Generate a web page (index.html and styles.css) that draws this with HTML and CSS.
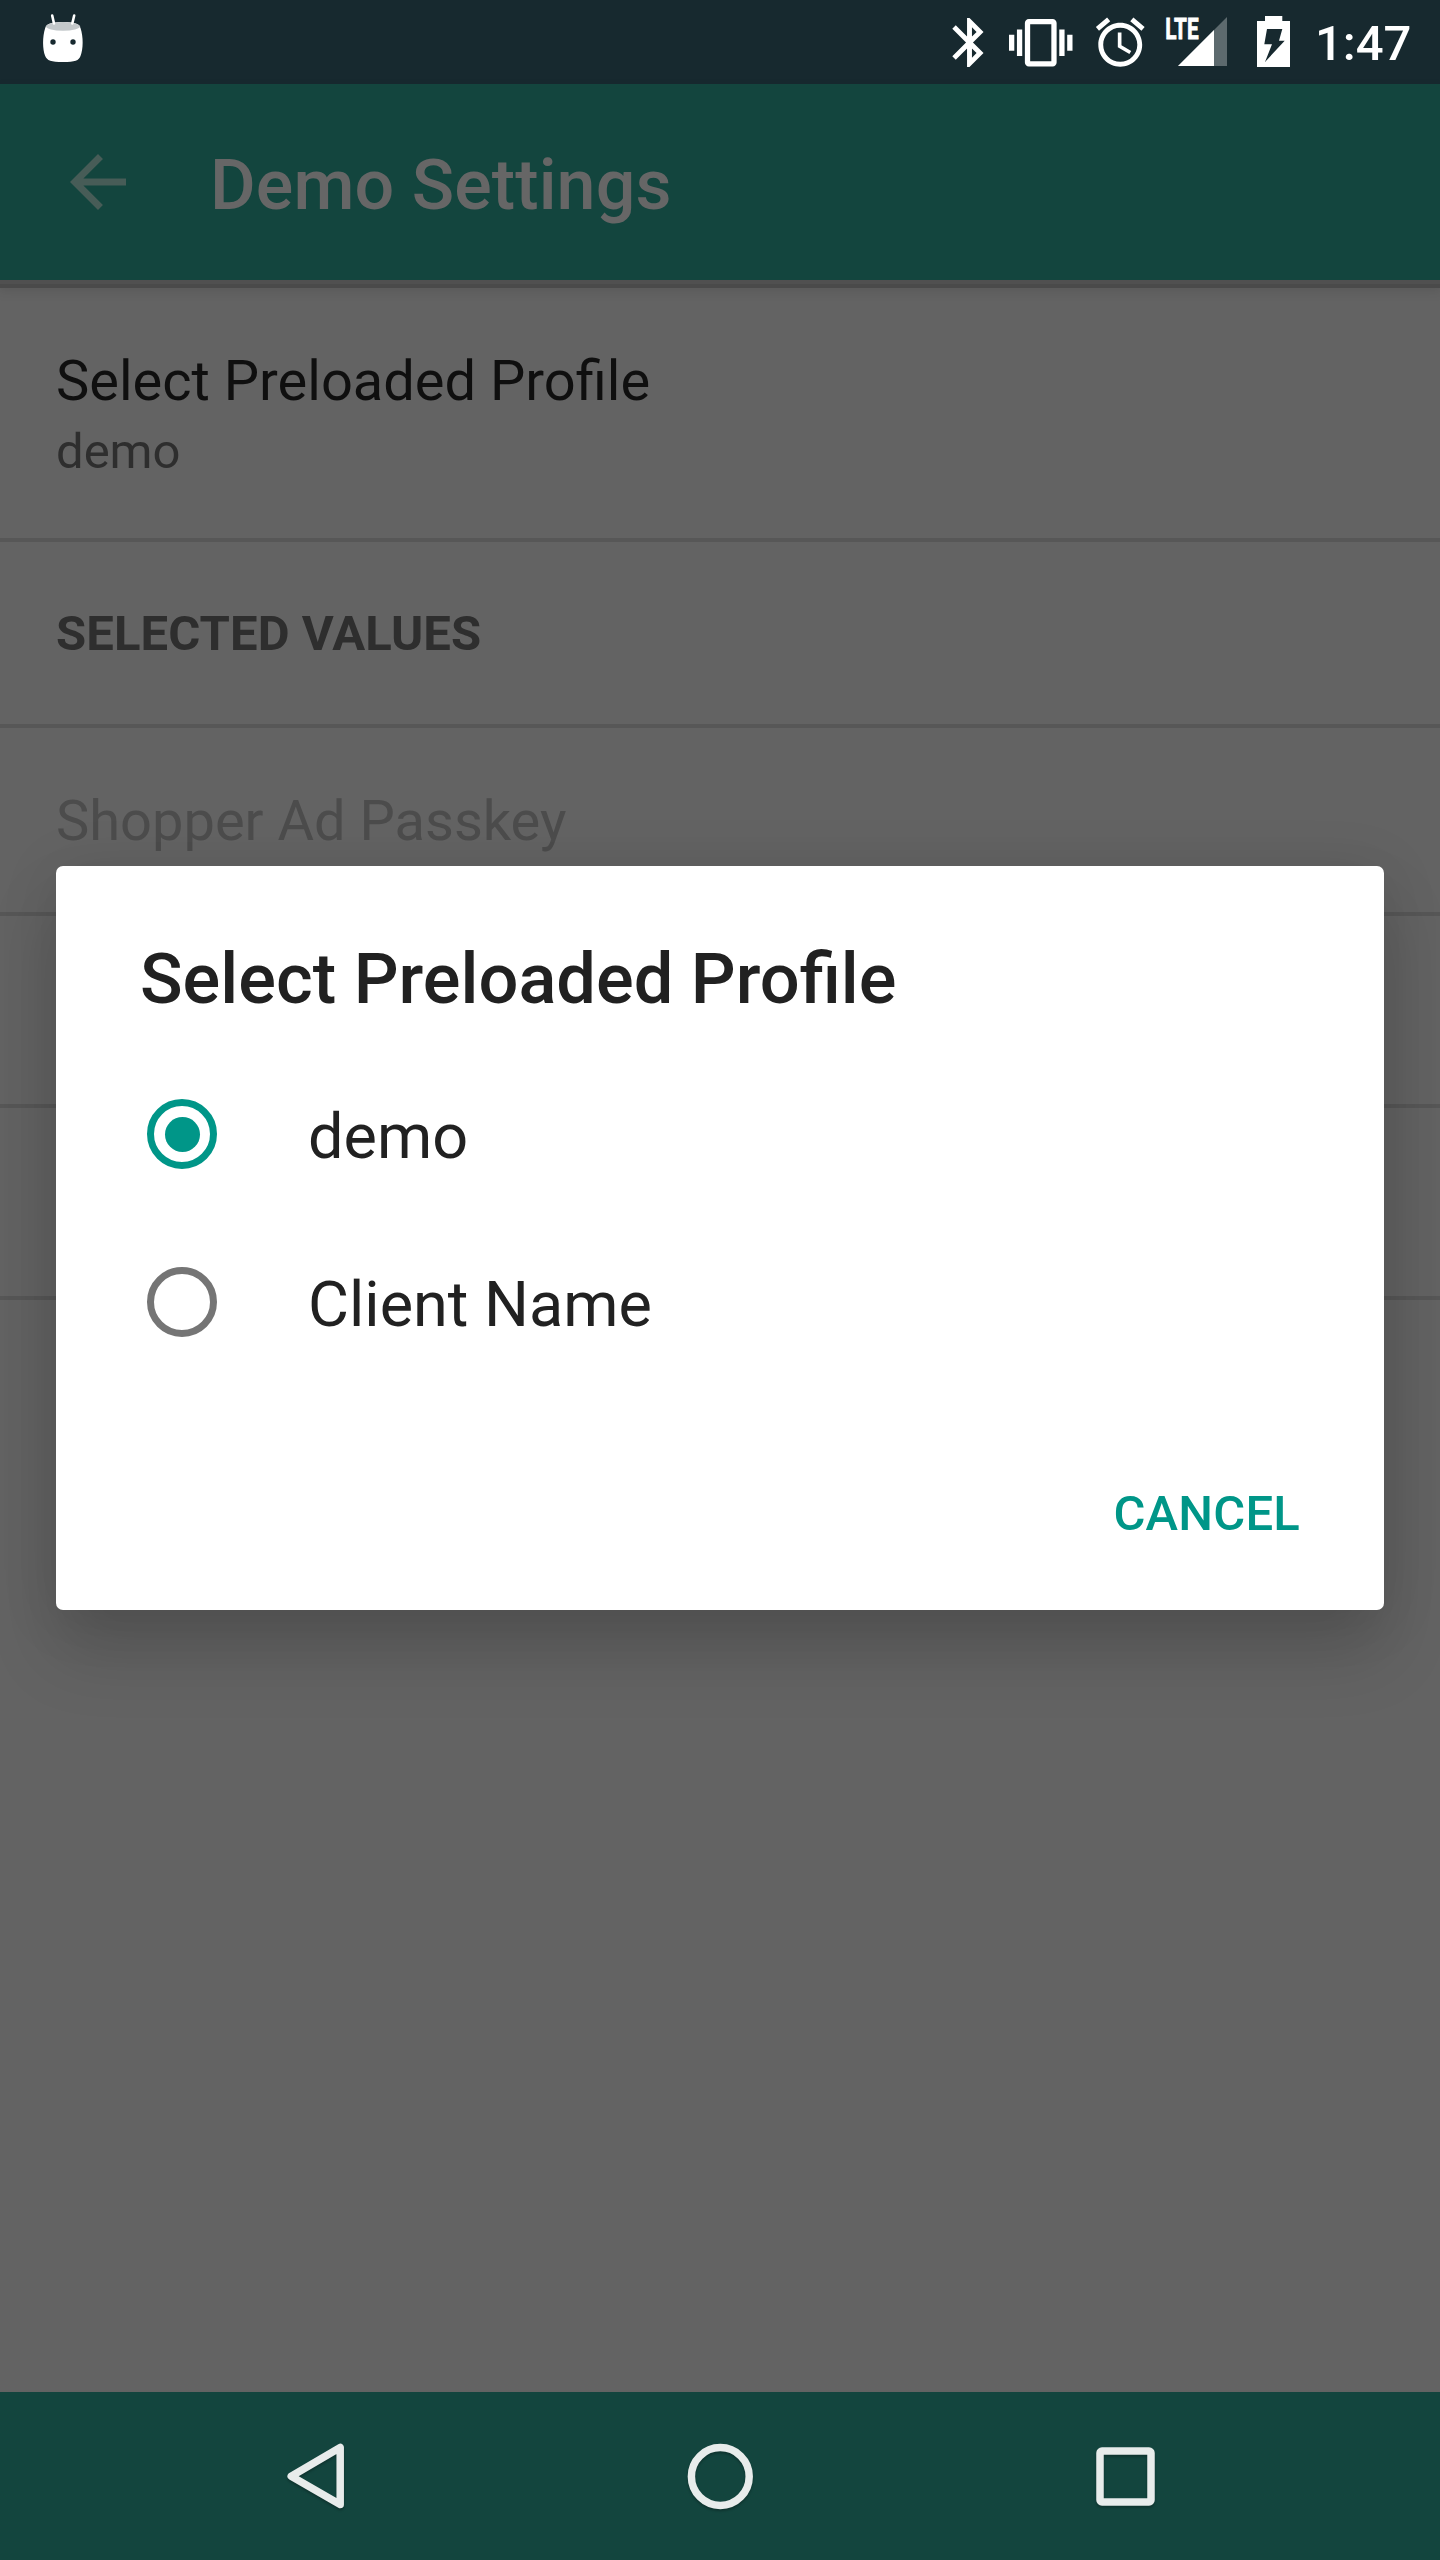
FILE: index.html
```html
<!DOCTYPE html>
<html lang="en">
<head>
<meta charset="utf-8">
<title>Demo Settings</title>
<link rel="stylesheet" href="styles.css">
</head>
<body>
<div class="screen">
  <header class="status-bar">
    <svg class="notification" width="44" height="52" viewBox="41 12 44 52">
      <path fill="#fff" d="M63 22C75 22 79 24 80.500 28C83.500 37 83.300 49 80.500 56C79 60.500 75 62 63 62C51 62 47 60.500 45.200 56C42.500 49 42.300 37 45.200 28C46.500 24 51 22 63 22Z"/>
      <ellipse cx="63" cy="26.300" rx="17" ry="4.400" fill="#c3c8ca"/>
      <path d="M52.200 15.500L54 23.500M74.200 15.500L72.300 23.500" stroke="#fff" stroke-width="2.600" stroke-linecap="round"/>
      <circle cx="53" cy="42" r="2.700" fill="#17292f"/>
      <circle cx="73" cy="42" r="2.700" fill="#17292f"/>
    </svg>
    <div class="status-icons">
      <svg class="bluetooth" viewBox="0 0 24 24"><path d="M17.710 7.710L12 2h-1v7.590L6.410 5 5 6.410 10.590 12 5 17.590 6.410 19 11 14.410V22h1l5.710-5.710-4.300-4.290 4.300-4.290zM13 5.830l1.880 1.880L13 9.590V5.830zm1.880 10.460L13 18.170v-3.760l1.880 1.880z"/></svg>
      <svg class="vibrate" viewBox="0 0 24 24"><path d="M0 15h2V9H0v6zm3 2h2V7H3v10zm19-8v6h2V9h-2zm-3 8h2V7h-2v10zM16.500 3h-9C6.670 3 6 3.670 6 4.500v15c0 .83.67 1.500 1.500 1.500h9c.83 0 1.500-.67 1.500-1.500v-15c0-.83-.67-1.500-1.500-1.500zM16 19H8V5h8v14z"/></svg>
      <svg class="alarm" viewBox="0 0 24 24"><path d="M22 5.720l-4.600-3.860-1.290 1.530 4.600 3.860L22 5.720zM7.880 3.390L6.600 1.860 2 5.710l1.290 1.530 4.590-3.850zM12.500 8H11v6l4.750 2.850.75-1.230-4-2.370V8zM12 4c-4.970 0-9 4.030-9 9s4.020 9 9 9c4.970 0 9-4.030 9-9s-4.030-9-9-9zm0 16c-3.870 0-7-3.130-7-7s3.130-7 7-7 7 3.130 7 7-3.130 7-7 7z"/></svg>
      <svg class="signal" width="68" height="66" viewBox="1160 4 68 66">
        <path d="M1227 17V66H1178Z" fill="#5d6a6e"/>
        <path d="M1214 30V66H1178Z"/>
        <text class="lte" x="1165.200" y="39" textLength="33.500" lengthAdjust="spacingAndGlyphs">LTE</text>
      </svg>
      <svg class="battery" width="33" height="51" viewBox="1257 16 33 51">
        <path fill-rule="evenodd" d="M1265 16H1282.300V21H1290V67H1257V21H1265ZM1267 29L1264.300 44.300H1272L1265 62L1284.700 40.700H1279L1282.300 29Z"/>
      </svg>
      <span class="clock">1:47</span>
    </div>
  </header>

  <div class="app-bar">
    <svg class="back" viewBox="0 0 24 24"><path d="M20 11H7.830l5.590-5.590L12 4l-8 8 8 8 1.410-1.410L7.830 13H20v-2z"/></svg>
    <h1 class="app-title">Demo Settings</h1>
  </div>

  <main class="settings">
    <div class="row row-profile">
      <div class="row-title">Select Preloaded Profile</div>
      <div class="row-summary">demo</div>
    </div>
    <div class="row row-header">SELECTED VALUES</div>
    <div class="row row-passkey">Shopper Ad Passkey</div>
    <div class="row row-empty"></div>
    <div class="row row-empty"></div>
  </main>

  <nav class="nav-bar">
    <svg class="nav-icon" viewBox="0 0 84 84"><path d="M67.200 13.500V70.600L18.200 42.200Z"/></svg>
    <svg class="nav-icon" viewBox="0 0 84 84"><circle cx="42.300" cy="42.500" r="28.900"/></svg>
    <svg class="nav-icon" viewBox="0 0 84 84"><rect x="17" y="17" width="51" height="51" rx="2"/></svg>
  </nav>

  <section class="dialog">
    <h2 class="dialog-title">Select Preloaded Profile</h2>
    <div class="option">
      <span class="radio radio-on"></span>
      <span class="option-label">demo</span>
    </div>
    <div class="option">
      <span class="radio"></span>
      <span class="option-label">Client Name</span>
    </div>
    <div class="actions"><span class="cancel">CANCEL</span></div>
  </section>
</div>
</body>
</html>
```
FILE: styles.css
```css
* {
  box-sizing: border-box;
}

body {
  margin: 0;
  font-family: Roboto, "Noto Sans", sans-serif;
}

svg {
  display: block;
  flex: none;
}

.screen {
  position: relative;
  display: flex;
  flex-direction: column;
  width: 1440px;
  height: 2560px;
  overflow: hidden;
  background: #636363;
}

.status-bar {
  display: flex;
  justify-content: space-between;
  height: 84px;
  padding: 0 29px 0 41px;
  background: #17292f;
}

.notification {
  margin-top: 12px;
}

.status-icons {
  display: flex;
  align-items: flex-start;
  fill: #fff;
}

.bluetooth {
  width: 59px;
  height: 59px;
  margin: 13px 10px 0 0;
}

.vibrate {
  width: 63.500px;
  height: 63.500px;
  margin: 11px 18px 0 0;
}

.alarm {
  width: 58.500px;
  height: 58.500px;
  margin: 13px 11px 0 0;
}

.signal {
  margin: 4px 29px 0 0;
}

.lte {
  font-size: 29.500px;
  font-weight: 700;
  stroke: #fff;
  stroke-width: 0.800px;
}

.battery {
  margin: 16px 25px 0 0;
}

.clock {
  width: 96px;
  margin-top: 15px;
  color: #fff;
  font-size: 49px;
  font-weight: 500;
  line-height: 58px;
}

.app-bar {
  z-index: 1;
  display: flex;
  align-items: center;
  height: 196px;
  padding-left: 56px;
  background: #13453e;
  box-shadow: 0 4px 0 #505050, 0 8px 0 #4a4a4a, 0 8px 12px 2px rgba(0, 0, 0, 0.12);
}

.back {
  width: 84px;
  height: 84px;
  fill: #475c57;
}

.app-title {
  margin: 6px 0 0 70px;
  color: #666;
  font-size: 70px;
  font-weight: 500;
  line-height: 82px;
  letter-spacing: 0.100px;
}

.settings {
  flex: 1;
}

.row {
  padding-left: 56px;
  border-bottom: 4px solid #575757;
}

.row-profile {
  height: 262px;
  padding-top: 68px;
}

.row-title {
  height: 68px;
  color: #0f0f0f;
  font-size: 56px;
  line-height: 66px;
}

.row-summary {
  color: #2e2e2e;
  font-size: 49px;
  line-height: 72px;
}

.row-header {
  height: 186px;
  padding-top: 63px;
  color: #2e2e2e;
  font-size: 49px;
  font-weight: 700;
  line-height: 58px;
  letter-spacing: 0.080px;
}

.row-passkey {
  height: 188px;
  padding-top: 60px;
  color: #4c4c4c;
  font-size: 56px;
  line-height: 66px;
}

.row-empty {
  height: 192px;
}

.nav-bar {
  display: flex;
  align-items: center;
  justify-content: center;
  gap: 321px;
  height: 168px;
  background: #13453e;
}

.nav-icon {
  width: 84px;
  height: 84px;
  fill: none;
  stroke: #e8eceb;
  stroke-width: 7.500px;
  stroke-linejoin: round;
  filter: drop-shadow(0 2px 1px rgba(0, 0, 0, 0.25));
}

.dialog {
  position: absolute;
  z-index: 2;
  top: 866px;
  left: 56px;
  width: 1328px;
  height: 744px;
  padding: 72px 84px 0;
  border-radius: 7px;
  background: #fff;
  box-shadow: 0 42px 70px rgba(0, 0, 0, 0.15), 0 6px 60px rgba(0, 0, 0, 0.1);
}

.dialog-title {
  margin: 0 0 30px;
  height: 82px;
  color: #212121;
  font-size: 70.400px;
  font-weight: 500;
  line-height: 82px;
}

.option {
  display: flex;
  align-items: center;
  height: 168px;
  padding-left: 7px;
}

.radio {
  display: flex;
  flex: none;
  align-items: center;
  justify-content: center;
  width: 70px;
  height: 70px;
  border: 7px solid #757575;
  border-radius: 50%;
}

.radio-on {
  border-color: #009688;
}

.radio-on::before {
  width: 35px;
  height: 35px;
  border-radius: 50%;
  background: #009688;
  content: "";
}

.option-label {
  margin: 5px 0 0 91px;
  color: #212121;
  font-size: 63px;
  line-height: 74px;
}

.actions {
  display: flex;
  justify-content: flex-end;
  padding-top: 99px;
}

.cancel {
  color: #009688;
  font-size: 49px;
  font-weight: 500;
  line-height: 58px;
  letter-spacing: 0.200px;
}
```
